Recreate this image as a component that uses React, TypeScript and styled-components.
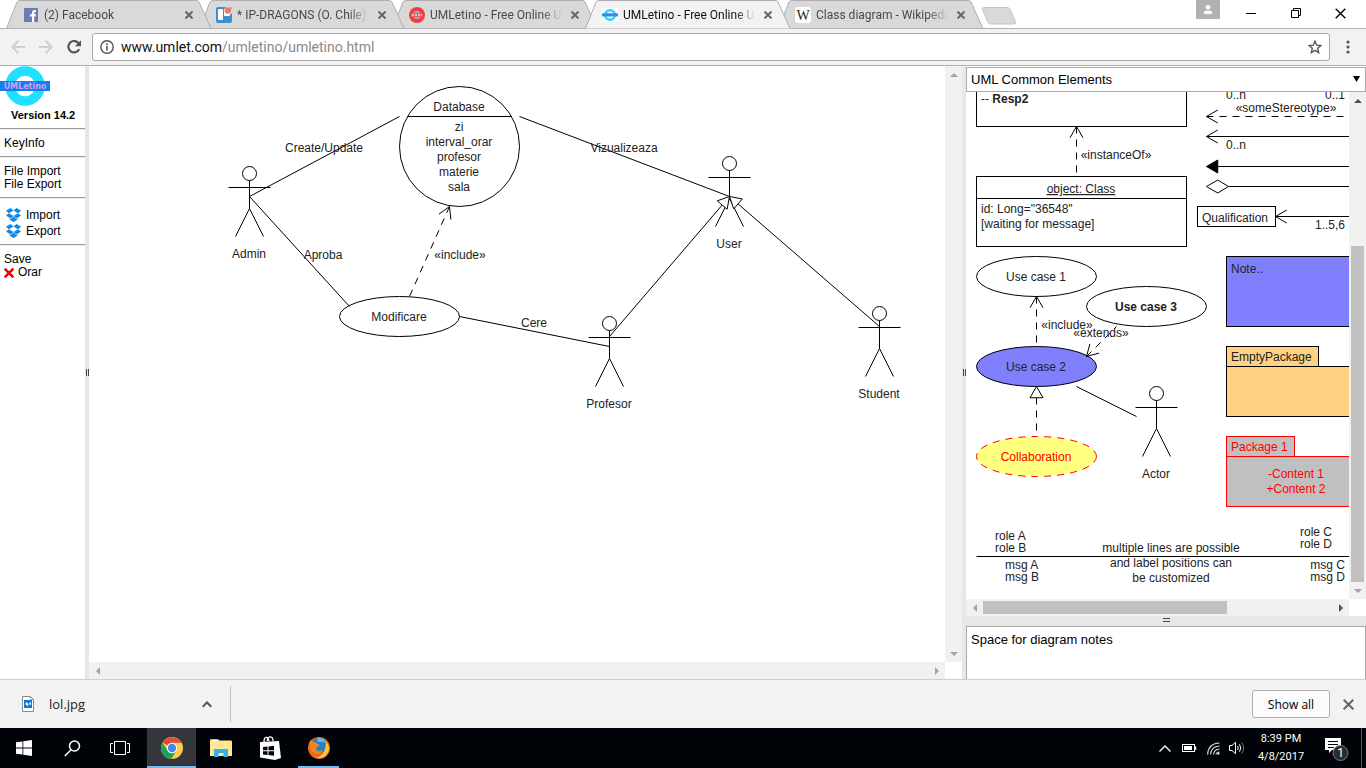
import React from "react";
import styled, { createGlobalStyle } from "styled-components";

const uiFont = `"Open Sans", "Noto Sans", sans-serif`;
const appFont = `"Liberation Sans", Arial, sans-serif`;

const GlobalStyle = createGlobalStyle`
  * { box-sizing: border-box; }
  body { margin: 0; background: #fff; font-family: ${appFont}; }
  button { border: 0; padding: 0; background: none; font: inherit; color: inherit; cursor: pointer; }
  a { color: inherit; text-decoration: none; }
  svg { display: block; }
`;

const Screen = styled.div`
  display: flex;
  flex-direction: column;
  height: 100vh;
  overflow: hidden;
`;

/* ---------- browser chrome ---------- */

const TabStrip = styled.header`
  display: flex;
  flex: none;
  height: 29px;
  padding-left: 6px;
  border-bottom: 1px solid #b1b1b1;
  font-family: Roboto, ${uiFont};
`;

const Tab = styled.div<{ $active?: boolean; $order: number }>`
  position: relative;
  z-index: ${(p) => (p.$active ? 10 : p.$order)};
  display: flex;
  align-items: center;
  gap: 5px;
  flex: 0 1 206px;
  min-width: 0;
  height: 29px;
  margin-right: -13px;
  padding: 0 15px 0 17px;
  font-size: 12px;
  line-height: 16px;
  color: ${(p) => (p.$active ? "#111" : "#4a4a4a")};
`;

const TabShape = styled.svg`
  position: absolute;
  inset: 0;
  z-index: -1;
  width: 100%;
  height: 29px;
`;

const TabTitle = styled.span`
  flex: 1;
  min-width: 0;
  overflow: hidden;
  white-space: nowrap;
  mask-image: linear-gradient(to right, #000 85%, transparent);
`;

const TabClose = styled.button`
  display: grid;
  place-items: center;
  width: 16px;
  height: 16px;
`;

const NewTab = styled.button`
  margin: 7px 0 0 10px;
  align-self: flex-start;
`;

const WindowControls = styled.div`
  display: flex;
  margin-left: auto;
  padding-right: 3px;
  height: 28px;
`;

const ProfileButton = styled.button`
  display: grid;
  place-items: center;
  width: 24px;
  height: 19px;
  margin-right: 8px;
  background: #b1b1b1;
`;

const WindowButton = styled.button`
  display: grid;
  place-items: center;
  width: 45px;
  height: 26px;
`;

const Toolbar = styled.nav`
  display: flex;
  align-items: center;
  flex: none;
  height: 37px;
  padding: 0 9px 0 4px;
  background: #f2f2f2;
  border-bottom: 1px solid #b1b1b1;
`;

const NavButton = styled.button`
  display: grid;
  place-items: center;
  width: 28px;
  height: 28px;
`;

const AddressBar = styled.div`
  display: flex;
  align-items: center;
  flex: 1;
  height: 28px;
  margin: 0 8px 0 4px;
  padding: 0 0 0 7px;
  gap: 7px;
  background: #fff;
  border: 1px solid #a9a9a9;
  border-radius: 3px;
`;

const UrlField = styled.div`
  position: relative;
  flex: 1;
  height: 20px;
  font-family: Roboto, ${uiFont};
  font-size: 14px;
  line-height: 20px;
  color: #8a8a8a;
  b { font-weight: 400; color: #111; }
`;

const UrlInput = styled.input`
  position: absolute;
  inset: 0;
  width: 100%;
  padding: 0;
  border: 0;
  background: transparent;
  outline: 0;
`;

/* ---------- editor ---------- */

const Workspace = styled.main`
  display: flex;
  flex: 1;
  min-height: 0;
`;

const Sidebar = styled.aside`
  flex: none;
  width: 85px;
  font-size: 12px;
  line-height: 13px;
  color: #000;
`;

const Version = styled.h1`
  margin: 0;
  padding: 2px 0 6px 11px;
  font-size: 11px;
  line-height: 14px;
`;

const MenuGroup = styled.section<{ $tall?: boolean }>`
  display: flex;
  flex-direction: column;
  align-items: flex-start;
  padding: ${(p) => (p.$tall ? "9px 4px 5px" : "8px 4px 6px")};
  border-top: 1px solid #9a9a9a;
  box-shadow: inset 0 1px #eee;
`;

const MenuItem = styled.button<{ $icon?: boolean }>`
  display: flex;
  align-items: center;
  gap: ${(p) => (p.$icon ? "5px" : "4px")};
  padding-left: ${(p) => (p.$icon ? "2px" : "0")};
  height: ${(p) => (p.$icon ? "16px" : "13px")};
`;

const VSplitter = styled.div`
  display: grid;
  place-items: center;
  flex: none;
  width: 4px;
  background: #e7e7e7;
`;

const HSplitter = styled.div`
  display: flex;
  justify-content: center;
  flex: none;
  height: 10px;
  padding-top: 2px;
  background: #e7e7e7;
`;

const ScrollPane = styled.div`
  display: grid;
  grid-template: minmax(0, 1fr) 17px / minmax(0, 1fr) 17px;
  flex: 1;
  min-width: 0;
  min-height: 0;
  background: #fff;
`;

const Drawing = styled.svg`
  width: 100%;
  height: 100%;
  overflow: hidden;
  font-family: ${appFont};
  font-size: 12px;
  fill: #222;
`;

const Track = styled.div<{ $dir: "row" | "column" }>`
  display: flex;
  flex-direction: ${(p) => p.$dir};
  background: #f1f1f1;
`;

const ArrowButton = styled.button`
  display: grid;
  place-items: center;
  flex: none;
  width: 17px;
  height: 17px;
`;

const Rail = styled.div<{ $dir: "row" | "column"; $end?: boolean }>`
  display: flex;
  flex: 1;
  flex-direction: ${(p) => p.$dir};
  justify-content: ${(p) => (p.$end ? "flex-end" : "flex-start")};
  padding: ${(p) => (p.$dir === "row" ? "2px 0" : "0 2px")};
`;

const Thumb = styled.div<{ $share: number }>`
  flex: 0 0 ${(p) => p.$share}%;
  background: #c1c1c1;
`;

const PalettePanel = styled.aside`
  display: flex;
  flex-direction: column;
  flex: none;
  width: 400px;
`;

const SelectBox = styled.div`
  position: relative;
  flex: none;
  height: 26px;
  padding-top: 1px;
  svg { position: absolute; right: 6px; top: 10px; pointer-events: none; }
`;

const PaletteSelect = styled.select`
  appearance: none;
  width: 100%;
  height: 25px;
  padding: 0 4px;
  border: 1px solid #a9a9a9;
  border-radius: 0;
  background: #fff;
  color: #000;
  font-family: ${appFont};
  font-size: 13px;
`;

const Notes = styled.textarea`
  flex: none;
  height: 53px;
  padding: 5px 4px;
  border: 1px solid #a9a9a9;
  border-bottom: 0;
  resize: none;
  outline: 0;
  font-family: ${appFont};
  font-size: 13px;
  line-height: 16px;
  color: #000;
`;

/* ---------- downloads and taskbar ---------- */

const DownloadBar = styled.section`
  display: flex;
  align-items: center;
  flex: none;
  height: 49px;
  padding: 0 12px 0 22px;
  background: #f2f2f2;
  border-top: 1px solid #cfcfcf;
  font-family: ${uiFont};
`;

const DownloadItem = styled.div`
  display: flex;
  align-items: center;
  width: 209px;
  height: 36px;
  padding-right: 18px;
  border-right: 1px solid #c4c4c4;
`;

const FileLink = styled.a`
  display: flex;
  align-items: center;
  gap: 15px;
  flex: 1;
  font-size: 13px;
  line-height: 18px;
  color: #222;
`;

const ShowAll = styled.button`
  width: 78px;
  height: 28px;
  margin: 0 13px 0 auto;
  border: 1px solid #b0b0b0;
  border-radius: 3px;
  background: #fbfbfb;
  font-size: 12px;
  color: #000;
`;

const Taskbar = styled.footer`
  display: flex;
  align-items: center;
  flex: none;
  height: 40px;
  background: #000307;
  color: #fff;
  font-family: Roboto, ${uiFont};
`;

const SystemButtons = styled.div`
  display: flex;
  margin-right: 3px;
`;

const SystemButton = styled.button`
  display: grid;
  place-items: center;
  width: 48px;
  height: 40px;
`;

const TaskButton = styled.button<{ $open?: boolean; $focused?: boolean }>`
  position: relative;
  display: grid;
  place-items: center;
  width: 49px;
  height: 40px;
  background: ${(p) => (p.$focused ? "#35363b" : "none")};
  &::after {
    content: "";
    display: ${(p) => (p.$open ? "block" : "none")};
    position: absolute;
    bottom: 0;
    left: ${(p) => (p.$focused ? "0" : "4px")};
    right: ${(p) => (p.$focused ? "0" : "4px")};
    height: 2px;
    background: #76b9ed;
  }
`;

const Tray = styled.div`
  display: flex;
  align-items: center;
  margin-left: auto;
  height: 40px;
`;

const TrayButton = styled.button`
  display: grid;
  place-items: center;
  width: 24px;
  height: 24px;
`;

const Clock = styled.time`
  width: 64px;
  font-size: 11px;
  line-height: 18px;
  text-align: center;
`;

const NotifyButton = styled.button`
  display: grid;
  place-items: center;
  width: 49px;
  height: 40px;
  border-right: 1px solid #555;
  margin-right: 4px;
`;

/* ---------- small drawings ---------- */

const Cross = ({ size = 8, color = "#666", width = 2 }: { size?: number; color?: string; width?: number }) => (
  <svg width={size} height={size} viewBox="0 0 8 8" stroke={color} strokeWidth={width} fill="none">
    <path d="M.5 .5L7.5 7.5M7.5 .5L.5 7.5" />
  </svg>
);

const FacebookIcon = () => (
  <svg width="16" height="16" viewBox="0 0 16 16">
    <rect x="1" y="1" width="14" height="14" fill="#6c7db3" />
    <path d="M9 15V9.5H7V7.3h2V5.6C9 3.8 10 3 11.8 3H13v2.2h-1c-.7 0-.8.3-.8.9v1.2H13l-.3 2.2h-1.5V15z" fill="#fff" />
  </svg>
);

const TrelloIcon = () => (
  <svg width="16" height="16" viewBox="0 0 16 16">
    <rect x="0" y="0" width="16" height="16" rx="2" fill="#3a92cb" />
    <rect x="2" y="2" width="5" height="11" rx="1" fill="#fff" />
    <rect x="8" y="2" width="6" height="7" rx="1" fill="#fff" />
    <circle cx="12" cy="4" r="4" fill="#f5f5f5" />
    <circle cx="12" cy="3.5" r="3.3" fill="#f37a6a" />
  </svg>
);

const RedUmlIcon = () => (
  <svg width="16" height="16" viewBox="0 0 16 16">
    <circle cx="8" cy="8" r="8" fill="#f43c3c" />
    <circle cx="8" cy="8" r="4.3" fill="#7fb0d8" />
    <rect x="2" y="6" width="12" height="4" rx="1" fill="#f05a5a" />
    <path d="M3 8h10" stroke="#fbd0d0" strokeWidth="1.5" strokeDasharray="2 1" />
  </svg>
);

const BlueUmlIcon = () => (
  <svg width="16" height="16" viewBox="0 0 16 16">
    <rect y="1" width="16" height="14" fill="#fff" />
    <circle cx="8" cy="8" r="4.8" fill="#fff" stroke="#1fdcff" strokeWidth="2.6" />
    <rect x="0" y="6.3" width="16" height="3.2" rx="1" fill="#3f86f0" />
  </svg>
);

const WikiIcon = () => (
  <svg width="16" height="16" viewBox="0 0 16 16">
    <rect width="16" height="16" rx="3" fill="#fff" />
    <text x="8" y="13" textAnchor="middle" fontFamily="Liberation Serif, serif" fontSize="14" fill="#222">W</text>
  </svg>
);

const UmletinoLogo = () => (
  <svg width="50" height="40" viewBox="0 0 50 40" role="img" aria-label="UMLetino">
    <circle cx="25" cy="20" r="15" fill="#fff" stroke="#1fe0ff" strokeWidth="9.5" />
    <rect y="15" width="50" height="10" fill="#0f7ff2" />
    <text x="25" y="23" textAnchor="middle" fontFamily="DejaVu Sans, sans-serif" fontSize="8" fontWeight="700" fill="#cfa0f0">UMLetino</text>
  </svg>
);

const DropboxIcon = () => (
  <svg width="15" height="14" viewBox="0 0 15 14" fill="#0f86e8">
    <path d="M4.4 0L0 2.8 3 5.2 7.5 2.5zM10.6 0L7.5 2.5 12 5.2 15 2.8zM0 7.6L4.4 10.4 7.5 7.9 3 5.2zM15 7.6L10.6 10.4 7.5 7.9 12 5.2zM7.5 8.6L4.4 11.2 3 10.4V11.3L7.5 14 12 11.3V10.4L10.6 11.2z" />
  </svg>
);

type Dir = "up" | "down" | "left" | "right";
const trianglePaths: Record<Dir, string> = {
  up: "M0 6L4 2L8 6z",
  down: "M0 2L4 6L8 2z",
  left: "M6 0L2 4L6 8z",
  right: "M2 0L6 4L2 8z",
};
const Triangle = ({ dir, on }: { dir: Dir; on?: boolean }) => (
  <svg width="8" height="8" viewBox="0 0 8 8">
    <path d={trianglePaths[dir]} fill={on ? "#505050" : "#a3a3a3"} />
  </svg>
);

const ScrollBar = ({ dir, thumb, end, on }: { dir: "row" | "column"; thumb?: number; end?: boolean; on?: Dir }) => {
  const [first, last]: Dir[] = dir === "row" ? ["left", "right"] : ["up", "down"];
  return (
    <Track $dir={dir}>
      <ArrowButton aria-label={`Scroll ${first}`}><Triangle dir={first} on={on === first} /></ArrowButton>
      <Rail $dir={dir} $end={end}>{thumb && <Thumb $share={thumb} />}</Rail>
      <ArrowButton aria-label={`Scroll ${last}`}><Triangle dir={last} on={on === last} /></ArrowButton>
    </Track>
  );
};

/* ---------- diagram pieces ---------- */

const ink = "#000";
const dashes = "7 6";

type Point = [number, number];

/* Shapes are drawn half a pixel off the grid to get sharp strokes; texts go back onto it. */
const Label = ({ x, y, children, anchor = "middle", ...rest }: {
  x: number; y: number; children: React.ReactNode; anchor?: "start" | "middle" | "end";
  fill?: string; fontWeight?: number; textDecoration?: string;
}) => (
  <text x={x - 0.5} y={y - 0.5} textAnchor={anchor} {...rest}>{children}</text>
);

const Lines = ({ x, y, step, rows, anchor, fill }: {
  x: number; y: number; step: number; rows: string[]; anchor?: "start" | "middle" | "end"; fill?: string;
}) => (
  <>
    {rows.map((row, i) => <Label key={row} x={x} y={y + i * step} anchor={anchor} fill={fill}>{row}</Label>)}
  </>
);

const UseCase = ({ x, y, name, fill = "none", color, bold, dashed }: {
  x: number; y: number; name: string; fill?: string; color?: string; bold?: boolean; dashed?: boolean;
}) => (
  <>
    <ellipse cx={x} cy={y} rx="60" ry="20" fill={fill} stroke={color ?? ink} strokeDasharray={dashed ? dashes : undefined} />
    <Label x={x} y={y + 5} fill={color} fontWeight={bold ? 700 : 400}>{name}</Label>
  </>
);

const Actor = ({ x, y, name }: { x: number; y: number; name: string }) => (
  <>
    <g fill="none" stroke={ink}>
      <circle cx={x} cy={y + 7} r="7" />
      <path d={`M${x} ${y + 14}V${y + 42}M${x - 21} ${y + 21}H${x + 21}M${x - 14} ${y + 70}L${x} ${y + 42}L${x + 14} ${y + 70}`} />
    </g>
    <Label x={x} y={y + 92}>{name}</Label>
  </>
);

/* A relation from one point to another, with an optional head at its end. */
const Relation = ({ from, to, head, dashed }: {
  from: Point; to: Point; head?: "open" | "triangle" | "filled" | "diamond"; dashed?: boolean;
}) => {
  const angle = Math.atan2(from[1] - to[1], from[0] - to[0]);
  const at = (d: number, side: number): Point => [
    to[0] + Math.cos(angle + side) * d,
    to[1] + Math.sin(angle + side) * d,
  ];
  const a = at(13, 0.5236);
  const b = at(13, -0.5236);
  const start = head === "triangle" || head === "filled" ? at(11, 0) : head === "diamond" ? at(22, 0) : to;
  return (
    <g fill="none" stroke={ink}>
      <path d={`M${start}L${from}`} strokeDasharray={dashed ? dashes : undefined} />
      {head === "open" && <path d={`M${a}L${to}L${b}`} />}
      {head === "triangle" && <path d={`M${a}L${to}L${b}z`} fill="#fff" />}
      {head === "filled" && <path d={`M${a}L${to}L${b}z`} fill={ink} />}
      {head === "diamond" && <path d={`M${to}L${a}L${start}L${b}z`} fill="#fff" />}
    </g>
  );
};

const Diagram = () => (
  <Drawing role="img" aria-label="Use case diagram">
    <g transform="translate(.5 .5)">
      <circle cx="370" cy="80" r="60" fill="none" stroke={ink} />
      <path d="M318 50H422" stroke={ink} />
      <Label x={370} y={45}>Database</Label>
      <Lines x={370} y={65} step={15} rows={["zi", "interval_orar", "profesor", "materie", "sala"]} />
      <UseCase x={310} y={250} name="Modificare" />
      <Actor x={160} y={100} name="Admin" />
      <Actor x={640} y={90} name="User" />
      <Actor x={520} y={250} name="Profesor" />
      <Actor x={790} y={240} name="Student" />
      <Relation from={[160, 130]} to={[310, 50]} />
      <Relation from={[160, 130]} to={[260, 240]} />
      <Relation from={[430, 50]} to={[640, 130]} />
      <Relation from={[370, 250]} to={[520, 280]} />
      <Relation from={[320, 230]} to={[360, 140]} head="open" dashed />
      <Relation from={[520, 270]} to={[640, 130]} head="triangle" />
      <Relation from={[790, 260]} to={[640, 130]} head="triangle" />
      <Label x={235} y={86}>Create/Update</Label>
      <Label x={234} y={193}>Aproba</Label>
      <Label x={371} y={193}>«include»</Label>
      <Label x={535} y={86}>Vizualizeaza</Label>
      <Label x={445} y={261}>Cere</Label>
    </g>
  </Drawing>
);

const Palette = () => (
  <Drawing role="img" aria-label="UML common elements">
    <g transform="translate(.5 -5.500)">
      <g fill="none" stroke={ink}>
        <rect x="10" y="-30" width="210" height="70" />
        <rect x="10" y="90" width="210" height="70" />
        <path d="M10 112H220M10 470H600" />
        <rect x="231" y="120" width="78" height="20" />
      </g>
      <Label x={15} y={17} anchor="start">-- <tspan fontWeight={700}>Resp2</tspan></Label>
      <Label x={115} y={107} textDecoration="underline">object: Class</Label>
      <Lines x={15} y={127} step={15} anchor="start" rows={['id: Long="36548"', "[waiting for message]"]} />
      <Relation from={[110, 90]} to={[110, 40]} head="open" dashed />
      <Label x={150} y={73}>«instanceOf»</Label>

      <Label x={260} y={13} anchor="start">0..n</Label>
      <Label x={379} y={13} anchor="end">0..1</Label>
      <Relation from={[500, 30]} to={[240, 30]} head="open" dashed />
      <Label x={320} y={26}>«someStereotype»</Label>
      <Relation from={[500, 50]} to={[240, 50]} head="open" />
      <Label x={260} y={63} anchor="start">0..n</Label>
      <Relation from={[500, 80]} to={[240, 80]} head="filled" />
      <Relation from={[500, 100]} to={[240, 100]} head="diamond" />
      <Label x={236} y={136} anchor="start">Qualification</Label>
      <Relation from={[500, 130]} to={[309, 130]} head="open" />
      <Label x={379} y={143} anchor="end">1..5,6</Label>

      <UseCase x={70} y={190} name="Use case 1" />
      <UseCase x={180} y={220} name="Use case 3" bold />
      <UseCase x={70} y={280} name="Use case 2" fill="#8080ff" />
      <UseCase x={70} y={370} name="Collaboration" fill="#ffff80" color="#f00" dashed />
      <Relation from={[70, 260]} to={[70, 210]} head="open" dashed />
      <Relation from={[150, 240]} to={[120, 270]} head="open" dashed />
      <Relation from={[70, 350]} to={[70, 300]} head="triangle" dashed />
      <Relation from={[110, 300]} to={[170, 330]} />
      <Label x={101} y={243}>«include»</Label>
      <Label x={135} y={251}>«extends»</Label>
      <Actor x={190} y={300} name="Actor" />

      <rect x="260" y="170" width="140" height="70" fill="#8080ff" stroke={ink} />
      <Label x={265} y={187} anchor="start">Note..</Label>
      <g fill="#ffd282" stroke={ink}>
        <rect x="260" y="260" width="92" height="20" />
        <rect x="260" y="280" width="140" height="50" />
      </g>
      <Label x={265} y={275} anchor="start">EmptyPackage</Label>
      <g fill="#c0c0c0" stroke="#f00">
        <rect x="260" y="350" width="68" height="20" />
        <rect x="260" y="370" width="140" height="50" />
      </g>
      <Label x={265} y={365} anchor="start" fill="#f00">Package 1</Label>
      <Lines x={330} y={392} step={15} fill="#f00" rows={["-Content 1", "+Content 2"]} />

      <Lines x={29} y={454} step={12} anchor="start" rows={["role A", "role B"]} />
      <Lines x={39} y={483} step={12} anchor="start" rows={["msg A", "msg B"]} />
      <Lines x={205} y={466} step={15} rows={["multiple lines are possible", "and label positions can", "be customized"]} />
      <Lines x={366} y={450} step={12} anchor="end" rows={["role C", "role D"]} />
      <Lines x={379} y={483} step={12} anchor="end" rows={["msg C", "msg D"]} />
    </g>
  </Drawing>
);

const tabs = [
  { title: "(2) Facebook", icon: <FacebookIcon /> },
  { title: "* IP-DRAGONS (O. Chile)", icon: <TrelloIcon /> },
  { title: "UMLetino - Free Online U", icon: <RedUmlIcon /> },
  { title: "UMLetino - Free Online U", icon: <BlueUmlIcon />, active: true },
  { title: "Class diagram - Wikipedi", icon: <WikiIcon /> },
];

export default function App() {
  return (
    <Screen>
      <GlobalStyle />
      <TabStrip>
        {tabs.map((tab, i) => (
          <Tab key={i} $active={tab.active} $order={tabs.length - i}>
            <TabShape viewBox="0 0 206 29" preserveAspectRatio="none">
              <path
                d="M.5 28.500L11 2Q12 .5 14 .5H190Q192 .5 193 2L205 28.500"
                fill={tab.active ? "#f2f2f2" : "#d9d9d9"}
                stroke="#aeaeae"
              />
              {!tab.active && <path d="M0 28.500H206" stroke="#b1b1b1" />}
            </TabShape>
            {tab.icon}
            <TabTitle>{tab.title}</TabTitle>
            <TabClose aria-label="Close tab"><Cross /></TabClose>
          </Tab>
        ))}
        <NewTab aria-label="New tab">
          <svg width="36" height="18" viewBox="0 0 36 18">
            <path d="M3 .5H26Q28 .5 29 2L34.500 15Q35 17 33 17H10Q8 17 7 15.500L1.500 2.500Q1 .5 3 .5z" fill="#d9d9d9" stroke="#c4c4c4" />
          </svg>
        </NewTab>
        <WindowControls>
          <ProfileButton aria-label="Profile">
            <svg width="8" height="9" viewBox="0 0 8 9" fill="#fff"><circle cx="4" cy="2.300" r="2.200" /><path d="M0 9V7.500Q0 5.500 4 5.500T8 7.500V9z" /></svg>
          </ProfileButton>
          <WindowButton aria-label="Minimize"><svg width="10" height="10"><path d="M0 5.500H10" stroke="#000" /></svg></WindowButton>
          <WindowButton aria-label="Restore">
            <svg width="10" height="10" fill="none" stroke="#000"><path d="M.5 2.500H7.500V9.500H.5zM2.500 2.500V.5H9.500V7.500H7.500" /></svg>
          </WindowButton>
          <WindowButton aria-label="Close"><Cross size={11} color="#000" width={1} /></WindowButton>
        </WindowControls>
      </TabStrip>

      <Toolbar>
        <NavButton aria-label="Back">
          <svg width="14" height="14" viewBox="0 0 14 14" fill="none" stroke="#cfcfcf" strokeWidth="2"><path d="M14 7H1.500M7.500 .8L1.300 7L7.500 13.200" /></svg>
        </NavButton>
        <NavButton aria-label="Forward">
          <svg width="14" height="14" viewBox="0 0 14 14" fill="none" stroke="#cfcfcf" strokeWidth="2"><path d="M0 7H12.500M6.500 .8L12.700 7L6.500 13.200" /></svg>
        </NavButton>
        <NavButton aria-label="Reload">
          <svg width="15" height="14" viewBox="0 0 15 14"><path d="M12.200 9.300A5.700 5.700 0 1 1 11.600 3.200" fill="none" stroke="#555" strokeWidth="2.200" /><path d="M14 .3V6.200H8z" fill="#555" /></svg>
        </NavButton>
        <AddressBar>
          <svg width="14" height="14" viewBox="0 0 14 14"><circle cx="7" cy="7" r="6.200" fill="none" stroke="#555" strokeWidth="1.400" /><path d="M6.200 6H7.800V10.500H6.200zM6.200 3.300H7.800V4.900H6.200z" fill="#555" /></svg>
          <UrlField>
            <b>www.umlet.com</b>/umletino/umletino.html
            <UrlInput aria-label="Address" />
          </UrlField>
          <NavButton aria-label="Bookmark">
            <svg width="14" height="14" viewBox="0 0 14 14"><path d="M7 1.300L8.700 5.200L12.900 5.500L9.700 8.300L10.700 12.500L7 10.300L3.300 12.500L4.300 8.300L1.100 5.500L5.300 5.200z" fill="none" stroke="#555" strokeWidth="1.400" /></svg>
          </NavButton>
        </AddressBar>
        <button aria-label="Menu">
          <svg width="19" height="14" fill="#555"><circle cx="10" cy="2" r="1.600" /><circle cx="10" cy="7" r="1.600" /><circle cx="10" cy="12" r="1.600" /></svg>
        </button>
      </Toolbar>

      <Workspace>
        <Sidebar>
          <UmletinoLogo />
          <Version>Version 14.2</Version>
          <MenuGroup><MenuItem>KeyInfo</MenuItem></MenuGroup>
          <MenuGroup><MenuItem>File Import</MenuItem><MenuItem>File Export</MenuItem></MenuGroup>
          <MenuGroup $tall>
            <MenuItem $icon><DropboxIcon />Import</MenuItem>
            <MenuItem $icon><DropboxIcon />Export</MenuItem>
          </MenuGroup>
          <MenuGroup>
            <MenuItem>Save</MenuItem>
            <MenuItem><Cross size={10} color="#f00000" />Orar</MenuItem>
          </MenuGroup>
        </Sidebar>
        <VSplitter><svg width="4" height="7"><path d="M1.500 0V7M3.500 0V7" stroke="#444" /></svg></VSplitter>
        <ScrollPane>
          <Diagram />
          <ScrollBar dir="column" />
          <ScrollBar dir="row" />
        </ScrollPane>
        <VSplitter><svg width="4" height="7"><path d="M1.500 0V7M3.500 0V7" stroke="#444" /></svg></VSplitter>
        <PalettePanel>
          <SelectBox>
            <PaletteSelect aria-label="Palette"><option>UML Common Elements</option></PaletteSelect>
            <svg width="7" height="6"><path d="M0 0H7L3.500 6z" fill="#000" /></svg>
          </SelectBox>
          <ScrollPane>
            <Palette />
            <ScrollBar dir="column" thumb={71} end on="up" />
            <ScrollBar dir="row" thumb={70} on="right" />
          </ScrollPane>
          <HSplitter><svg width="7" height="4"><path d="M0 .5H7M0 3.500H7" stroke="#444" /></svg></HSplitter>
          <Notes aria-label="Diagram notes" defaultValue="Space for diagram notes" />
        </PalettePanel>
      </Workspace>

      <DownloadBar>
        <DownloadItem>
          <FileLink href="#lol">
            <svg width="12" height="16" viewBox="0 0 12 16"><path d="M.5 .5H8.500L11.500 3.500V15.500H.5z" fill="#fff" stroke="#8a8a8a" /><path d="M8.500 .5V3.500H11.500" fill="none" stroke="#aaa" /><rect x="2" y="4" width="8" height="8" fill="#0b7ad9" /><path d="M3 8L5 6L6.500 9L8 6L9 7V9L7 8L6 10z" fill="#fff" /></svg>
            lol.jpg
          </FileLink>
          <button aria-label="Download options"><svg width="10" height="7" fill="none" stroke="#555" strokeWidth="2"><path d="M.7 5.700L5 1.500L9.300 5.700" /></svg></button>
        </DownloadItem>
        <ShowAll>Show all</ShowAll>
        <button aria-label="Close downloads"><Cross size={11} width={1.5} /></button>
      </DownloadBar>

      <Taskbar>
        <SystemButtons>
          <SystemButton aria-label="Start">
            <svg width="16" height="16" viewBox="0 0 16 16" fill="#fff"><path d="M0 2.300L6.500 1.400V7.600H0zM7.300 1.300L16 0V7.600H7.300zM0 8.400H6.500V14.600L0 13.700zM7.300 8.400H16V16L7.300 14.700z" /></svg>
          </SystemButton>
          <SystemButton aria-label="Search">
            <svg width="17" height="17" viewBox="0 0 17 17" fill="none" stroke="#fff" strokeWidth="1.500"><circle cx="10.500" cy="6" r="5" /><path d="M7 9.700L.8 16" /></svg>
          </SystemButton>
          <SystemButton aria-label="Task view">
            <svg width="20" height="14" viewBox="0 0 20 14" fill="none" stroke="#fff"><path d="M4.500 .5H15.500V13.500H4.500zM3 2.500H.5V11.500H3M17 2.500H19.500V11.500H17" /></svg>
          </SystemButton>
        </SystemButtons>
        <TaskButton aria-label="Chrome" $open $focused>
          <svg width="22" height="22" viewBox="0 0 22 22">
            <circle cx="11" cy="11" r="11" fill="#ffcd46" />
            <path d="M11 11L1.500 5.500A11 11 0 0 1 20.500 5.800H11z" fill="#dc4b3e" />
            <path d="M1.500 5.500A11 11 0 0 0 10.200 22L15.500 13.600L11 16A5 5 0 0 1 6.500 13.500z" fill="#1ba15e" />
            <circle cx="11" cy="11" r="5.200" fill="#fff" /><circle cx="11" cy="11" r="4.200" fill="#4a86e8" />
          </svg>
        </TaskButton>
        <TaskButton aria-label="File Explorer">
          <svg width="22" height="18" viewBox="0 0 22 18"><path d="M0 1Q0 0 1 0H8L10 2H0z" fill="#e8b23a" /><path d="M0 1.500H21Q22 1.500 22 3V17H0z" fill="#ffe794" /><rect x="2" y="1" width="6" height="1" fill="#fff" /><path d="M4 10H18V18H13.500V14H8.500V18H4z" fill="#38b0e8" /></svg>
        </TaskButton>
        <TaskButton aria-label="Store">
          <svg width="22" height="24" viewBox="0 0 22 24"><path d="M1 6L20 5L22 22L16 24L1 21.500z" fill="#fff" /><path d="M5 6C5 0 9 0 10 5M8 5C9 -1 14 0 14 5" fill="none" stroke="#fff" strokeWidth="1.300" /><path d="M4 11L8.500 10.500V14.300H4zM9.500 10.400L15 9.700V14.300H9.500zM4 15.300H8.500V19L4 18.400zM9.500 15.300H15V19.800L9.500 19.100z" fill="#000307" /></svg>
        </TaskButton>
        <TaskButton aria-label="Firefox" $open>
          <svg width="22" height="22" viewBox="0 0 22 22">
            <circle cx="11" cy="11" r="11" fill="#e8681c" />
            <path d="M5 3A10.500 10.500 0 0 1 20 7Q20 15 12 16Q7 14 6 8z" fill="#2a7fc4" />
            <path d="M9 1Q16 0 18 6Q14 4 10 5z" fill="#5cc0ea" />
            <path d="M18 4Q24 12 18 18.500Q13 22.500 8 20.500Q18 19 18 4z" fill="#ffc63a" />
            <path d="M1 6L3 2.500L5 5Q8 4.500 9 6.500L12 8L9 10Q7 12 9 13.500Q12 15 15 13Q13 18 8 17Q1 14 1 6z" fill="#f0851f" />
          </svg>
        </TaskButton>
        <Tray>
          <TrayButton aria-label="Hidden icons"><svg width="12" height="7" fill="none" stroke="#fff" strokeWidth="1.300"><path d="M.5 6.500L6 1L11.500 6.500" /></svg></TrayButton>
          <TrayButton aria-label="Battery"><svg width="15" height="10"><rect x=".5" y="1.500" width="12" height="7" fill="none" stroke="#fff" /><rect x="2" y="3" width="8" height="4" fill="#fff" /><path d="M13.500 3.500V7" stroke="#fff" strokeWidth="1.500" /></svg></TrayButton>
          <TrayButton aria-label="Network">
            <svg width="13" height="13" viewBox="0 0 13 13" fill="none" stroke="#ddd" strokeWidth="1.100"><path d="M.6 12.500Q1 1.500 12.500 1M3.600 12.500Q4 4.500 12.500 4M6.500 12.500Q7 7.500 12.500 7M9 12.500Q9.500 10.300 12.500 10" /><circle cx="11.500" cy="11.700" r="1" fill="#fff" stroke="none" /></svg>
          </TrayButton>
          <TrayButton aria-label="Volume">
            <svg width="16" height="14" viewBox="0 0 16 14" fill="none" stroke="#fff"><path d="M.5 4.500H3L6.500 1.300V12.700L3 9.500H.5zM8.500 5Q10 7 8.500 9M10.500 3.300Q13 7 10.500 10.700" /><path d="M12.800 1.500Q16.500 7 12.800 12.500" stroke="#777" /></svg>
          </TrayButton>
          <Clock>8:39 PM<br />4/8/2017</Clock>
          <NotifyButton aria-label="Notifications">
            <svg width="26" height="26" viewBox="0 0 26 26"><path d="M1 3H17V15H8L5 18V15H1z" fill="#fff" /><path d="M4 6.500H14M4 9.500H14M4 12.500H10" stroke="#000307" /><circle cx="16.500" cy="18" r="7.500" fill="#2b2c2f" stroke="#777" /><text x="16.500" y="22" textAnchor="middle" fontSize="12" fill="#fff">1</text></svg>
          </NotifyButton>
        </Tray>
      </Taskbar>
    </Screen>
  );
}
